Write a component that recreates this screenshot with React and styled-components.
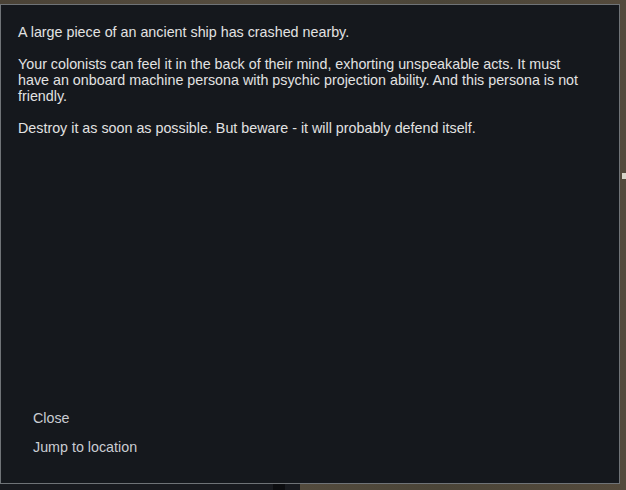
import React from "react";
import styled, { createGlobalStyle } from "styled-components";

const Global = createGlobalStyle`
  html, body { margin: 0; padding: 0; }
  body {
    width: 626px;
    height: 490px;
    overflow: hidden;
    background: #4d463a;
    font-family: "Liberation Sans", Arial, sans-serif;
  }
`;

const Screen = styled.div`
  width: 626px;
  height: 490px;
  display: flex;
  flex-direction: column;
  background: linear-gradient(90deg, #4a4236 0%, #564d3f 40%, #4b4538 70%, #544a3c 100%);
`;

const TopStrip = styled.div`
  height: 4px;
  flex: none;
`;

const Middle = styled.div`
  display: flex;
  height: 480px;
  flex: none;
`;

const Dialog = styled.div`
  width: 620px;
  height: 480px;
  box-sizing: border-box;
  border: 1px solid #6f7377;
  background: #15181d;
  display: flex;
  flex-direction: column;
  padding: 19px 0 0 17px;
`;

const SideStrip = styled.div`
  flex: 1;
  display: flex;
  flex-direction: column;
  padding-top: 169px;
`;

const Tick = styled.div`
  width: 4px;
  height: 6px;
  margin-left: 2px;
  background: #d8d4c8;
`;

const Body = styled.div`
  color: #e2e2e2;
  font-size: 14.3px;
  line-height: 16px;
  width: 570px;
  flex: 1;
`;

const Para = styled.p`
  margin: 0 0 16px 0;
`;

const Buttons = styled.div`
  display: flex;
  flex-direction: column;
  gap: 13px;
  padding: 0 0 28px 15px;
`;

const TextButton = styled.div`
  color: #c9ccd2;
  font-size: 14.3px;
  line-height: 16px;
  cursor: pointer;
`;

const BottomStrip = styled.div`
  height: 6px;
  display: flex;
  flex: none;
`;

const DarkPanel = styled.div`
  width: 300px;
  background: #181a1f;
  display: flex;
  padding-left: 273px;
  box-sizing: border-box;
`;

const DarkBlock = styled.div`
  width: 12px;
  background: #0c0d10;
`;

export default function App() {
  return (
    <>
      <Global />
      <Screen>
        <TopStrip />
        <Middle>
          <Dialog>
            <Body>
              <Para>A large piece of an ancient ship has crashed nearby.</Para>
              <Para>
                Your colonists can feel it in the back of their mind, exhorting unspeakable acts. It must
                have an onboard machine persona with psychic projection ability. And this persona is not
                friendly.
              </Para>
              <Para>Destroy it as soon as possible. But beware - it will probably defend itself.</Para>
            </Body>
            <Buttons>
              <TextButton>Close</TextButton>
              <TextButton>Jump to location</TextButton>
            </Buttons>
          </Dialog>
          <SideStrip>
            <Tick />
          </SideStrip>
        </Middle>
        <BottomStrip>
          <DarkPanel>
            <DarkBlock />
          </DarkPanel>
        </BottomStrip>
      </Screen>
    </>
  );
}
